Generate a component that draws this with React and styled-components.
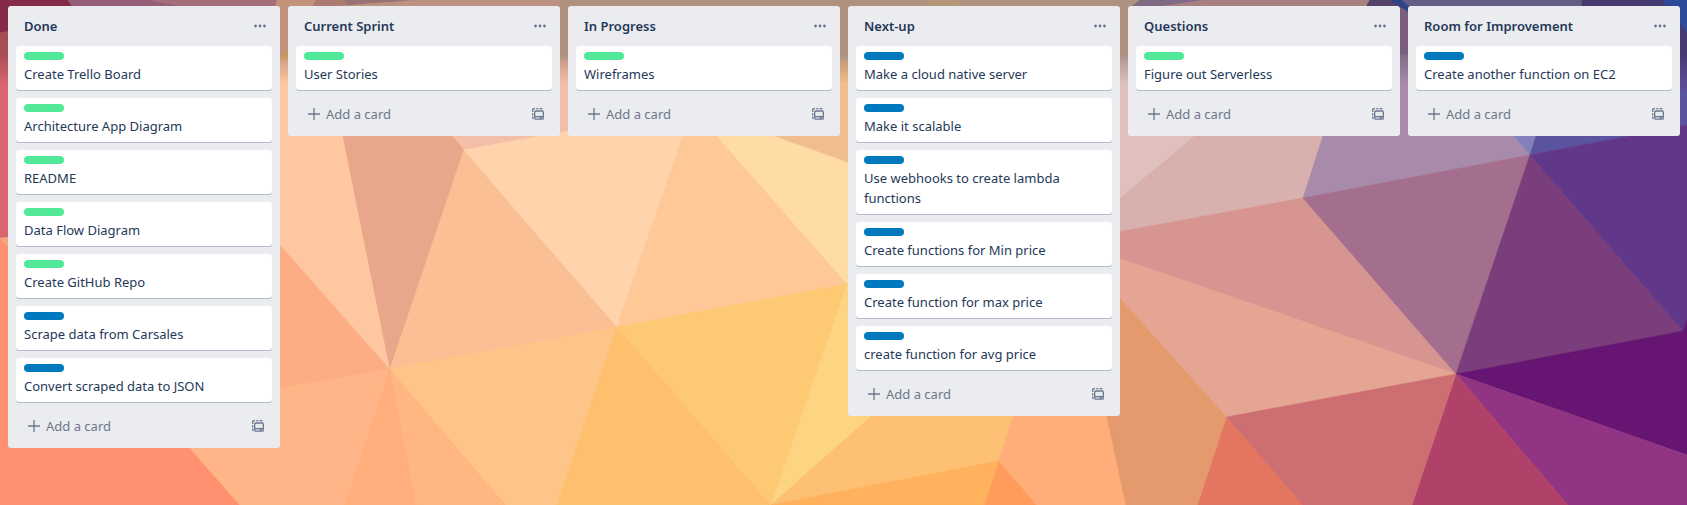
import React from "react";
import styled, { createGlobalStyle } from "styled-components";

const GlobalStyle = createGlobalStyle`
  * { box-sizing: border-box; }
  html { height: 100%; }
  body {
    margin: 0;
    min-height: 100%;
    font-family: "Noto Sans", "Open Sans", sans-serif;
    font-size: 13px;
    line-height: 20px;
    color: #253858;
  }
`;

const Page = styled.div`
  position: relative;
  min-height: 100vh;
  overflow: hidden;
  background: #fec486;
`;

const Backdrop = styled.div`
  position: absolute;
  inset: 0;

  svg {
    display: block;
    width: 100%;
    height: 100%;
  }

  &::after {
    content: "";
    position: absolute;
    inset: 0;
    background: linear-gradient(
      rgba(0, 0, 0, 0.23) 0,
      rgba(0, 0, 0, 0.23) 54px,
      rgba(0, 0, 0, 0) 84px
    );
  }
`;

const Board = styled.main`
  position: relative;
  display: grid;
  grid-auto-flow: column;
  grid-auto-columns: minmax(272px, 1fr);
  align-items: start;
  gap: 8px;
  padding: 6px 7px 8px 8px;
  overflow-x: auto;
`;

const List = styled.section`
  padding: 0 8px 6px;
  border-radius: 3px;
  background: #ebecf0;
`;

const ListHeader = styled.header`
  display: flex;
  align-items: center;
  justify-content: space-between;
  height: 40px;
  padding-left: 8px;
`;

const ListTitle = styled.h2`
  margin: 0;
  font-size: 13px;
  font-weight: 600;
  line-height: 20px;
`;

const IconButton = styled.button`
  display: flex;
  align-items: center;
  justify-content: center;
  width: 24px;
  height: 28px;
  padding: 0;
  border: 0;
  border-radius: 3px;
  background: transparent;
  color: #6b778c;
  cursor: pointer;

  &:hover { background: rgba(9, 30, 66, 0.08); }
`;

const Cards = styled.ul`
  display: flex;
  flex-direction: column;
  gap: 8px;
  margin: 0;
  padding: 0;
  list-style: none;
`;

const Card = styled.li`
  padding: 6px 8px;
  border-radius: 3px;
  background: #fff;
  box-shadow: 0 1px 0 rgba(9, 30, 66, 0.25);
`;

const Label = styled.span`
  display: block;
  width: 40px;
  height: 8px;
  margin-bottom: 4px;
  border-radius: 4px;
  background: ${({ $tone }) => ($tone === "green" ? "#51e898" : "#0079bf")};
`;

const CardTitle = styled.p`
  margin: 0;
`;

const ListFooter = styled.footer`
  display: flex;
  align-items: center;
  justify-content: space-between;
  height: 32px;
  margin-top: 8px;
  padding-right: 2px;
`;

const AddButton = styled.button`
  display: flex;
  align-items: center;
  gap: 6px;
  height: 28px;
  padding: 0 12px;
  border: 0;
  border-radius: 3px;
  background: transparent;
  color: #6b778c;
  font: inherit;
  cursor: pointer;

  &:hover { background: rgba(9, 30, 66, 0.08); }
`;

const LISTS = [
  {
    title: "Done",
    cards: [
      ["green", "Create Trello Board"],
      ["green", "Architecture App Diagram"],
      ["green", "README"],
      ["green", "Data Flow Diagram"],
      ["green", "Create GitHub Repo"],
      ["blue", "Scrape data from Carsales"],
      ["blue", "Convert scraped data to JSON"],
    ],
  },
  { title: "Current Sprint", cards: [["green", "User Stories"]] },
  { title: "In Progress", cards: [["green", "Wireframes"]] },
  {
    title: "Next-up",
    cards: [
      ["blue", "Make a cloud native server"],
      ["blue", "Make it scalable"],
      ["blue", "Use webhooks to create lambda functions"],
      ["blue", "Create functions for Min price"],
      ["blue", "Create function for max price"],
      ["blue", "create function for avg price"],
    ],
  },
  { title: "Questions", cards: [["green", "Figure out Serverless"]] },
  { title: "Room for Improvement", cards: [["blue", "Create another function on EC2"]] },
];

const FACETS = [
  // Upper edge
  ["#ac3860", "0,0 68,0 80,18 0,33"],
  ["#c27b9f", "68,0 150,0 190,8 80,18"],
  ["#d58fa0", "150,0 277,0 270,20 190,8"],
  ["#d9656f", "0,33 80,18 190,8 270,20 277,60 253,214 0,240"],
  ["#fcbf9f", "277,0 316,0 296,40 277,60"],
  ["#de9f92", "316,0 420,0 400,10 340,40 330,90 288,60 296,40"],
  ["#c99397", "345,0 430,0 470,8 350,8"],
  ["#f4bfa8", "340,6 420,0 620,0 740,40 568,131 464,150 452,136 330,60"],
  ["#f0be8e", "620,0 850,0 860,170 773,136 700,100 568,131 600,60"],
  ["#e3bca6", "560,0 925,0 1120,60 1060,120 848,70 848,60 560,60"],
  ["#eac49d", "925,0 958,0 990,8 930,8"],
  ["#e3bca6", "958,0 1145,0 1160,90 1010,40"],
  ["#a58bab", "1140,0 1212,0 1180,8 1130,8"],
  ["#d9a6a8", "1205,0 1372,0 1360,8 1150,8"],
  ["#6f568b", "1370,0 1410,0 1420,8 1365,8"],
  ["#a07aa5", "1365,8 1420,8 1420,60 1365,60"],
  ["#3d58ae", "1390,0 1407,0 1412,14"],
  ["#8478ac", "1402,0 1584,0 1570,30 1470,60"],
  ["#5c4b93", "1582,0 1668,0 1687,30 1687,90 1580,70"],
  ["#3a61c6", "1662,0 1687,0 1687,32"],
  // Left
  ["#ff9070", "0,238 190,448 240,505 0,505"],
  ["#f5a480", "0,238 253,214 390,369 280,392 140,391"],
  ["#fdad83", "253,214 390,369 200,409"],
  ["#ffb587", "156,410 390,369 345,505 240,505"],
  ["#ffae7c", "390,369 416,505 345,505"],
  ["#ffb680", "390,369 506,505 416,505"],
  ["#ffc7a1", "277,60 300,60 343,136 390,369 253,214"],
  ["#e8a78b", "300,60 440,120 452,136 464,150 390,369 343,136"],
  // Centre
  ["#fbbf95", "464,150 617,327 390,369"],
  ["#ffd3ab", "464,150 568,131 700,107 683,136 617,327"],
  ["#ffc897", "692,107 717,136 847,284 617,327 683,136"],
  ["#ffdca6", "692,107 773,136 1069,241 847,284 717,136"],
  ["#ffc588", "390,369 617,327 557,505 506,505"],
  ["#fec06e", "617,327 771,505 557,505"],
  ["#fec973", "617,327 847,284 771,505"],
  ["#fdd482", "847,284 1069,241 771,505"],
  ["#fec074", "771,505 1069,241 999,461"],
  ["#ffb15b", "771,505 999,461 985,505"],
  ["#ff9c5c", "999,461 1037,505 985,505"],
  ["#ffae7a", "999,461 1069,241 1126,505 1037,505"],
  ["#e49a6d", "1069,241 1227,417 1198,505 1126,505"],
  ["#e37561", "1227,417 1303,505 1198,505"],
  // Right
  ["#dfc0bc", "1069,241 1040,100 1160,40 1300,40 1195,136"],
  ["#d8b0ae", "1069,241 1195,136 1300,40 1350,60 1323,136 1303,198"],
  ["#d79592", "1069,241 1303,198 1456,374"],
  ["#e4a592", "1069,241 1456,374 1227,417"],
  ["#a88bab", "1303,198 1323,136 1350,50 1470,60 1514,136 1530,155"],
  ["#8380bb", "1470,60 1560,60 1536,136 1530,155 1514,136"],
  ["#5b52a0", "1560,60 1687,90 1687,125 1530,155 1536,136"],
  ["#a46f8e", "1303,198 1530,155 1456,374"],
  ["#7a3e7c", "1530,155 1683,331 1456,374"],
  ["#613789", "1530,155 1687,125 1687,320 1683,331"],
  ["#671572", "1456,374 1683,331 1687,320 1687,455"],
  ["#923484", "1456,374 1687,455 1687,505 1568,505"],
  ["#b0426a", "1456,374 1568,505 1412,505"],
  ["#cd6e73", "1456,374 1412,505 1303,505 1227,417"],
];

function LowPolyArt() {
  return (
    <svg viewBox="0 0 1687 505" preserveAspectRatio="xMidYMin slice" aria-hidden="true">
      {FACETS.map(([color, points]) => (
        <polygon key={points} points={points} fill={color} stroke={color} strokeWidth="0.6" />
      ))}
    </svg>
  );
}

function DotsIcon() {
  return (
    <svg width="14" height="4" viewBox="0 0 14 4" fill="currentColor" aria-hidden="true">
      <circle cx="2.5" cy="2" r="1.4" />
      <circle cx="7" cy="2" r="1.4" />
      <circle cx="11.5" cy="2" r="1.4" />
    </svg>
  );
}

function PlusIcon() {
  return (
    <svg width="12" height="12" viewBox="0 0 12 12" stroke="currentColor" strokeWidth="1.3" aria-hidden="true">
      <path d="M6 0v12M0 6h12" />
    </svg>
  );
}

function TemplateIcon() {
  return (
    <svg width="12" height="12" viewBox="0 0 12 12" fill="none" stroke="currentColor" strokeWidth="1.3" aria-hidden="true">
      <path d="M0.7 10.4V8.6M0.7 7.4V5.2M0.7 4V1.6Q0.7 0.7 1.6 0.7H3M4.2 0.7H6.4M7.6 0.7H9.4Q10 0.7 10 1.4M0.7 10.3H1.6" />
      <rect x="2.7" y="3" width="8.6" height="8.2" rx="1.2" />
      <path d="M2.7 8.6H11.3" />
      <path d="M7.6 9.8H9.8" strokeWidth="1.8" />
    </svg>
  );
}

function BoardList({ title, cards }) {
  return (
    <List aria-label={title}>
      <ListHeader>
        <ListTitle>{title}</ListTitle>
        <IconButton type="button" aria-label="List actions">
          <DotsIcon />
        </IconButton>
      </ListHeader>
      <Cards>
        {cards.map(([tone, text]) => (
          <Card key={text}>
            <Label $tone={tone} />
            <CardTitle>{text}</CardTitle>
          </Card>
        ))}
      </Cards>
      <ListFooter>
        <AddButton type="button">
          <PlusIcon />
          Add a card
        </AddButton>
        <IconButton type="button" aria-label="Create from template">
          <TemplateIcon />
        </IconButton>
      </ListFooter>
    </List>
  );
}

export default function App() {
  return (
    <Page>
      <GlobalStyle />
      <Backdrop>
        <LowPolyArt />
      </Backdrop>
      <Board>
        {LISTS.map((list) => (
          <BoardList key={list.title} {...list} />
        ))}
      </Board>
    </Page>
  );
}
